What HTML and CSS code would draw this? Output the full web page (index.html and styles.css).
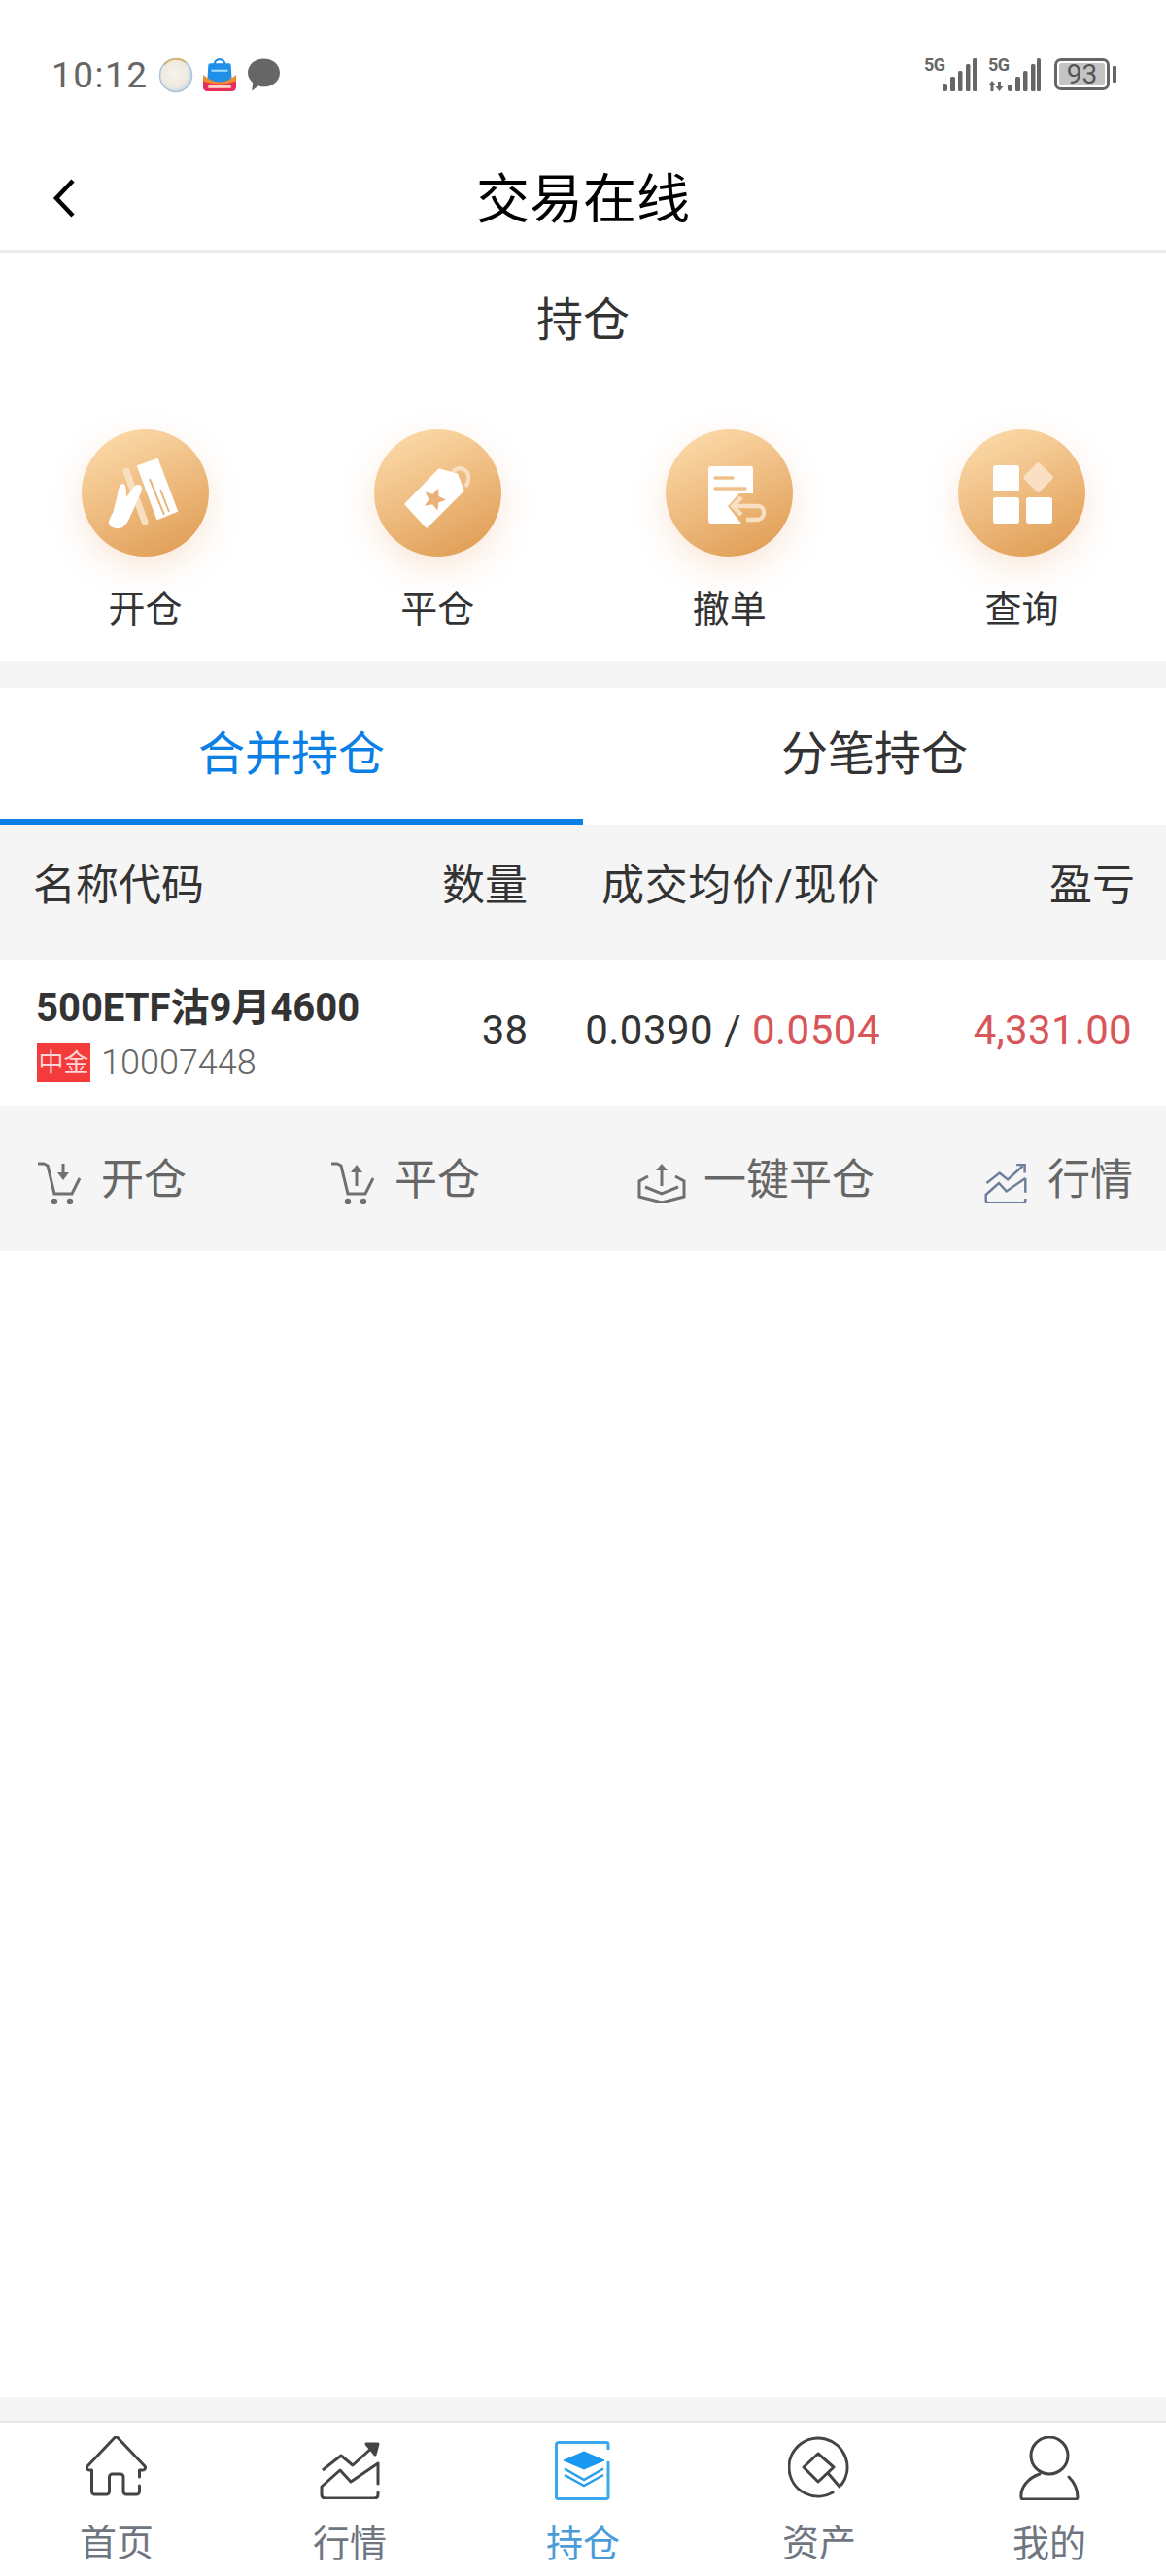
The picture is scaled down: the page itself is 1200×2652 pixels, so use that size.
FILE: index.html
```html
<!DOCTYPE html>
<html lang="zh-CN">

<head>
    <meta charset="UTF-8" />
    <title>交易在线</title>
    <link rel="stylesheet" href="styles.css">
</head>

<body>
    <!-- 状态栏 -->
    <div class="status">
        <div class="status-left">
            <span class="time">10:12</span>
            <svg class="note" width="36" height="37" viewBox="0 0 36 37">
                <defs>
                    <radialGradient id="pearl" cx="45%" cy="45%" r="55%">
                        <stop offset="0" stop-color="#f6f3ec" />
                        <stop offset=".75" stop-color="#efe9df" />
                        <stop offset="1" stop-color="#c9d9e6" />
                    </radialGradient>
                </defs>
                <ellipse cx="18" cy="18.500" rx="16.500" ry="17" fill="url(#pearl)" stroke="#a9c5dc" stroke-width="1.500" />
                <path d="M6 8a16 16 0 0 1 22-3" fill="none" stroke="#d8b25c" stroke-width="1.600" />
            </svg>
            <svg class="note" width="38" height="34" viewBox="0 0 34 32">
                <path d="M12 6a5 5 0 0 1 10 0" fill="none" stroke="#1f8fe8" stroke-width="2" />
                <path d="M8 5h18a2 2 0 0 1 2 2l1 17H5L6 7a2 2 0 0 1 2-2z" fill="#1f8fe8" />
                <rect x="9" y="11" width="16" height="2" fill="#9fdcff" />
                <path d="M1 16q8 7 16 7t16-7v10H1z" fill="#f28a2e" />
                <path d="M1 22q8 3 16 3t16-3v6a4 4 0 0 1-4 4H5a4 4 0 0 1-4-4z" fill="#e62e5c" />
                <rect x="6" y="26" width="22" height="3" fill="#ffd4c4" />
            </svg>
            <svg class="note chat" width="35" height="36" viewBox="0 0 34 34">
                <path d="M17 1c9 0 16 6 16 14s-7 14-16 14c-2 0-4 0-5-1l-7 5 1-8c-3-3-5-6-5-10C1 7 8 1 17 1z" fill="#666" />
            </svg>
        </div>
        <div class="status-right">
            <div class="signal first">
                <span class="net">5G</span>
                <svg width="36" height="34" viewBox="0 0 36 34" fill="#666">
                    <rect x="0" y="26" width="5" height="8" rx="2" />
                    <rect x="8" y="19" width="5" height="15" rx="1.500" />
                    <rect x="16" y="13" width="4.500" height="21" rx="1.500" />
                    <rect x="24" y="6" width="4.500" height="28" rx="1.500" />
                    <rect x="31" y="0" width="4.500" height="34" rx="1.500" />
                </svg>
            </div>
            <div class="signal">
                <span class="net">5G</span>
                <svg width="54" height="34" viewBox="0 0 54 34" fill="#666">
                    <path d="M4 23l4 5H5.500v6h-3v-6H0z" />
                    <path d="M10 24h3v5h2.500L11.500 34l-4-5H10z" />
                    <rect x="20" y="27" width="5" height="7" rx="2" />
                    <rect x="28" y="19" width="5" height="15" rx="1.500" />
                    <rect x="36" y="13" width="4.500" height="21" rx="1.500" />
                    <rect x="44" y="6" width="4.500" height="28" rx="1.500" />
                    <rect x="50" y="0" width="4" height="34" rx="1.500" />
                </svg>
            </div>
            <div class="battery">
                <div class="battery-body"><span class="battery-fill">93</span></div>
                <div class="battery-nub"></div>
            </div>
        </div>
    </div>

    <!-- 标题栏 -->
    <div class="nav">
        <svg class="back" width="26" height="40" viewBox="0 0 26 40">
            <path d="M22 2L5 20l17 18" fill="none" stroke="#000" stroke-width="4.500" />
        </svg>
        <h1>交易在线</h1>
    </div>

    <!-- 功能入口 -->
    <div class="entry">
        <h2>持仓</h2>
        <div class="entry-list">
            <div class="entry-item">
                <div class="circle">
                    <svg width="131" height="131" viewBox="0 0 131 131">
                        <path d="M46 43L65 95" stroke="#f8dfc2" stroke-width="7" stroke-linecap="round" />
                        <path d="M58 38L78 31l20 53-20 8z" fill="#fff" stroke="#fff" stroke-width="2" stroke-linejoin="round" />
                        <path d="M70 51L85 88M81 62l9 23" stroke="#eab57c" stroke-width="2" />
                        <path d="M28 97c-1-4 4-9 5-14l4-16c1-6 2-10 5-11 3 0 4 5 4 9v5l8-11c3-3 8-3 8 2 0 3-3 8-4 11l-9 20c-2 4-4 7-7 9-4 2-13 1-14-4z" fill="#fff" />
                    </svg>
                </div>
                <span>开仓</span>
            </div>
            <div class="entry-item">
                <div class="circle">
                    <svg width="131" height="131" viewBox="0 0 131 131">
                        <path d="M80 48a8 8 0 0 1 13-6c6 3 5 12 1 17" fill="none" stroke="#f8dfc2" stroke-width="4" />
                        <path d="M33 77L67 42l18 5 6 16-37 37z" fill="#fff" stroke="#fff" stroke-width="3" stroke-linejoin="round" />
                        <path d="M0-12L3.200-4.400 11.400-3.700 5.200 1.700 7.100 9.700 0 5.500-7.100 9.700-5.200 1.700-11.400-3.700-3.200-4.400z" transform="translate(62 72) rotate(20)" fill="#e9b077" />
                    </svg>
                </div>
                <span>平仓</span>
            </div>
            <div class="entry-item">
                <div class="circle">
                    <svg width="131" height="131" viewBox="0 0 131 131">
                        <path d="M47 38h40a3 3 0 0 1 3 3v25H76L64 79l14 18H47a3 3 0 0 1-3-3V41a3 3 0 0 1 3-3z" fill="#fff" />
                        <path d="M51 50h18M51 61h31" stroke="#eec08c" stroke-width="3.500" stroke-linecap="round" />
                        <path d="M78 70l-9 9 9 9M71 79h24a6 6 0 0 1 6 7 7 7 0 0 1-6 7H83" fill="none" stroke="#f8dfc2" stroke-width="4.500" />
                    </svg>
                </div>
                <span>撤单</span>
            </div>
            <div class="entry-item">
                <div class="circle">
                    <svg width="131" height="131" viewBox="0 0 131 131" fill="#fff">
                        <rect x="36" y="37" width="27" height="27" rx="3" />
                        <rect x="36" y="70" width="27" height="27" rx="3" />
                        <rect x="70" y="70" width="27" height="27" rx="3" />
                        <rect x="71" y="38" width="23" height="23" rx="2.500" fill="#f9e0c4" transform="rotate(45 82.500 49.500)" />
                    </svg>
                </div>
                <span>查询</span>
            </div>
        </div>
    </div>

    <!-- 持仓切换 -->
    <div class="tabs">
        <div class="tab active">合并持仓</div>
        <div class="tab">分笔持仓</div>
    </div>

    <div class="table-head">
        <span class="col-name">名称代码</span>
        <span class="col-num">数量</span>
        <span class="col-price">成交均价/现价</span>
        <span class="col-profit">盈亏</span>
    </div>

    <div class="row">
        <div class="col-name">
            <div class="name">500ETF沽9月4600</div>
            <div class="code"><span class="tag">中金</span>10007448</div>
        </div>
        <span class="col-num">38</span>
        <span class="col-price">0.0390 / <em>0.0504</em></span>
        <span class="col-profit"><em>4,331.00</em></span>
    </div>

    <div class="actions">
        <div class="action act-open">
            <svg width="46" height="44" viewBox="0 0 46 44" fill="none" stroke="#707070" stroke-width="3">
                <path d="M1 2h6l4 2 7 29h18l8-16" />
                <path d="M27 2v12" />
                <path d="M21 11h12l-6 8z" fill="#707070" stroke="none" />
                <circle cx="18" cy="41" r="3.200" fill="#707070" stroke="none" />
                <circle cx="34" cy="41" r="3.200" fill="#707070" stroke="none" />
            </svg>
            <span>开仓</span>
        </div>
        <div class="action act-close">
            <svg width="46" height="44" viewBox="0 0 46 44" fill="none" stroke="#707070" stroke-width="3">
                <path d="M1 2h6l4 2 7 29h18l8-16" />
                <path d="M27 9v16" />
                <path d="M21 11h12l-6-8z" fill="#707070" stroke="none" />
                <circle cx="18" cy="41" r="3.200" fill="#707070" stroke="none" />
                <circle cx="34" cy="41" r="3.200" fill="#707070" stroke="none" />
            </svg>
            <span>平仓</span>
        </div>
        <div class="action act-all">
            <svg width="50" height="42" viewBox="0 0 50 42" fill="none" stroke="#707070" stroke-width="3">
                <path d="M11 14l-9 5v16l23 6 23-6V19l-9-5" />
                <path d="M8 25l17 7 17-7" />
                <path d="M25 24V6" />
                <path d="M19 8h12l-6-7z" fill="#707070" stroke="none" />
            </svg>
            <span>一键平仓</span>
        </div>
        <div class="action act-quote">
            <svg width="46" height="42" viewBox="0 0 62 60" fill="none" stroke="#6d7d9c" stroke-width="3.500">
                <path d="M3 30L22 15l12 10L56 5" />
                <path d="M47 3h12v12" />
                <path d="M60 23L32 42 21 30 2 47v8q0 4 4 4h50q4 0 4-4v-2M60 23v21" />
            </svg>
            <span>行情</span>
        </div>
    </div>

    <div class="blank"></div>
    <div class="bar-gap"></div>

    <!-- 底部导航 -->
    <div class="tabbar">
        <div class="bar-item">
            <svg width="64" height="64" viewBox="0 0 64 64" fill="none" stroke="#444" stroke-width="3" stroke-linejoin="round" stroke-linecap="round">
                <path d="M55.500 51v6a3 3 0 0 1-3 3H42a3 3 0 0 1-3-3V42a3 3 0 0 0-3-3h-8.500a3 3 0 0 0-3 3v15a3 3 0 0 1-3 3H9.500a3 3 0 0 1-3-3V35H4a2.500 2.500 0 0 1-2-4L29.500 2a2.500 2.500 0 0 1 4 0L61 31a2.500 2.500 0 0 1-2 4h-3.500v7" />
            </svg>
            <span>首页</span>
        </div>
        <div class="bar-item down">
            <svg width="64" height="60" viewBox="0 0 62 60" fill="none" stroke="#444" stroke-width="3" stroke-linejoin="round">
                <path d="M3 30L22 15l12 10L57 4" />
                <path d="M48 3h12L57 14z" fill="#444" />
                <path d="M60 23L32 42 21 30 2 47v8q0 4 4 4h50q4 0 4-4v-2M60 23v21" stroke-linecap="round" />
            </svg>
            <span>行情</span>
        </div>
        <div class="bar-item down active">
            <svg width="58" height="62" viewBox="0 0 58 62">
                <path d="M55 9V3.500a2 2 0 0 0-2-2H3.500a2 2 0 0 0-2 2v54a2 2 0 0 0 2 2H53a2 2 0 0 0 2-2V21" fill="none" stroke="#3ba7ee" stroke-width="3" />
                <path d="M30 11l21 9-21 9-21-9z" fill="#1a97ee" stroke="#1a97ee" stroke-linejoin="round" />
                <path d="M10 28.500L30 40l20-11.500M10 35L30 46l20-11" fill="none" stroke="#2a9fe8" stroke-width="2.500" />
            </svg>
            <span>持仓</span>
        </div>
        <div class="bar-item asset">
            <svg width="64" height="64" viewBox="0 0 64 64" fill="none" stroke="#444" stroke-width="3" stroke-linejoin="round" stroke-linecap="round">
                <path d="M46 58A30 30 0 1 1 55 50" />
                <path d="M31 18L47 32 31 47 16 32z" />
                <path d="M41 38L53 52" />
            </svg>
            <span>资产</span>
        </div>
        <div class="bar-item">
            <svg width="62" height="66" viewBox="0 0 62 66" fill="none" stroke="#444" stroke-width="3" stroke-linejoin="round" stroke-linecap="round">
                <ellipse cx="31" cy="20" rx="19" ry="19" />
                <path d="M21 39C9 43 1 53 2 63a2 2 0 0 0 2 2h54a2 2 0 0 0 2-2c0-8-3-15-9-21" />
            </svg>
            <span class="mine">我的</span>
        </div>
    </div>
</body>

</html>
```

FILE: styles.css
```css
* {
    box-sizing: border-box;
}

body {
    display: flex;
    flex-direction: column;
    height: 2652px;
    margin: 0;
    padding: 0;
    background-color: #fff;
    color: #333;
    font-family: Roboto, "Noto Sans CJK SC", sans-serif;
}

/* 状态栏 */
.status {
    display: flex;
    justify-content: space-between;
    align-items: center;
    height: 154px;
    padding: 0 51px 0 53px;
}

.status-left {
    display: flex;
    align-items: center;
    gap: 8px;
}

.time {
    font-size: 37px;
    color: #666;
    letter-spacing: 1.500px;
    margin-right: 2px;
}

.chat {
    margin-left: 1px;
}

.status-right {
    display: flex;
    align-items: flex-start;
}

.signal {
    position: relative;
    display: flex;
    margin-right: 11px;
}

.signal.first {
    padding-left: 19px;
}

.net {
    position: absolute;
    left: 0;
    top: -1px;
    font-size: 18px;
    font-weight: 700;
    color: #666;
    line-height: 16px;
    letter-spacing: -.5px;
}

.battery {
    display: flex;
    align-items: center;
    gap: 3px;
    margin-left: 3px;
}

.battery-body {
    width: 57px;
    height: 33px;
    padding: 2px;
    border: 3px solid #666;
    border-radius: 7px;
}

.battery-fill {
    display: block;
    height: 100%;
    background-color: #c4c4c4;
    border-radius: 3px;
    font-size: 28px;
    line-height: 23px;
    text-align: center;
    color: #555;
}

.battery-nub {
    width: 4px;
    height: 17px;
    background-color: #666;
    border-radius: 1px;
}

/* 标题栏 */
.nav {
    position: relative;
    height: 106px;
    border-bottom: 3px solid #ebebeb;
    text-align: center;
}

.nav h1 {
    margin: 0;
    font-size: 55px;
    font-weight: 400;
    line-height: 102px;
    color: #000;
}

.back {
    position: absolute;
    left: 53px;
    top: 30px;
}

/* 功能入口 */
.entry {
    height: 421px;
}

.entry h2 {
    margin: 0;
    height: 136px;
    font-size: 48px;
    font-weight: 400;
    line-height: 140px;
    text-align: center;
}

.entry-list {
    display: flex;
    gap: 169.700px;
    padding: 46px 0 0 84px;
}

.entry-item {
    display: flex;
    flex-direction: column;
    align-items: center;
    width: 131px;
    font-size: 38px;
    line-height: 50px;
}

.entry-item span {
    margin-top: 29px;
}

.circle {
    width: 131px;
    height: 131px;
    border-radius: 50%;
    background: linear-gradient(155deg, #fcdcab 5%, #f0bf85 45%, #df9c53 95%);
    box-shadow: 0 12px 34px rgba(232, 170, 115, .28);
}

.circle svg {
    display: block;
}

/* 持仓切换 */
.tabs {
    display: flex;
    height: 168px;
    border-top: 27px solid #f5f5f5;
}

.tab {
    flex: 1;
    height: 141px;
    font-size: 48px;
    line-height: 138px;
    text-align: center;
}

.tab.active {
    color: #0a7fe6;
    border-bottom: 6px solid #0a7fe6;
}

.table-head {
    display: flex;
    align-items: center;
    height: 139px;
    padding: 0 32px 22px 34px;
    background-color: #f5f5f5;
    font-size: 44px;
}

.table-head .col-price {
    letter-spacing: .7px;
}

.row {
    display: flex;
    align-items: center;
    height: 151px;
    padding: 0 35px 0 37px;
    font-size: 42px;
}

.row > span {
    margin-bottom: 6px;
}

.row .col-price {
    letter-spacing: .5px;
}

.row .col-profit {
    letter-spacing: .3px;
}

.row em {
    font-style: normal;
    color: #d8555a;
}

.col-name {
    width: 420px;
}

.col-num {
    width: 89px;
    text-align: right;
}

.col-price {
    width: 363px;
    text-align: right;
}

.col-profit {
    flex: 1;
    text-align: right;
}

.row .col-num {
    width: 86px;
}

.name {
    font-size: 40px;
    font-weight: 700;
    line-height: 44px;
    padding-top: 2px;
}

.code {
    display: flex;
    align-items: center;
    gap: 11px;
    margin-top: 14px;
    padding-left: 1px;
    font-size: 36px;
    font-weight: 300;
    line-height: 40px;
    color: #666;
}

.tag {
    width: 55px;
    height: 40px;
    background-color: #f33b3b;
    color: #ffd5d5;
    font-size: 26px;
    font-weight: 400;
    line-height: 40px;
    text-align: center;
}

/* 操作栏 */
.actions {
    display: flex;
    align-items: center;
    height: 149px;
    padding-left: 38px;
    background-color: #f5f5f5;
    font-size: 44px;
    color: #666;
}

.action {
    display: flex;
    align-items: center;
    gap: 20px;
}

.action svg {
    margin-top: 8px;
}

.action span {
    margin-bottom: 6px;
}

.act-open {
    width: 302px;
}

.act-close {
    width: 316px;
}

.act-all {
    width: 356px;
    gap: 18px;
}

.blank {
    flex: 1;
}

.bar-gap {
    height: 24px;
    background-color: #f5f5f5;
}

/* 底部导航 */
.tabbar {
    display: grid;
    grid-template-columns: repeat(5, 1fr);
    height: 160px;
    border-top: 3px solid #e6e6e6;
}

.bar-item {
    display: flex;
    flex-direction: column;
    align-items: center;
    padding-top: 13px;
    font-size: 38px;
    line-height: 48px;
    color: #6f7680;
}

.bar-item span {
    margin-top: 22px;
}

.bar-item span.mine {
    margin-top: 21px;
}

.bar-item.down {
    padding-top: 18px;
}

.bar-item.active span {
    margin-top: 20px;
}

.bar-item.asset {
    margin-left: 6px;
}

.bar-item.active {
    color: #4b9bd8;
}
```
